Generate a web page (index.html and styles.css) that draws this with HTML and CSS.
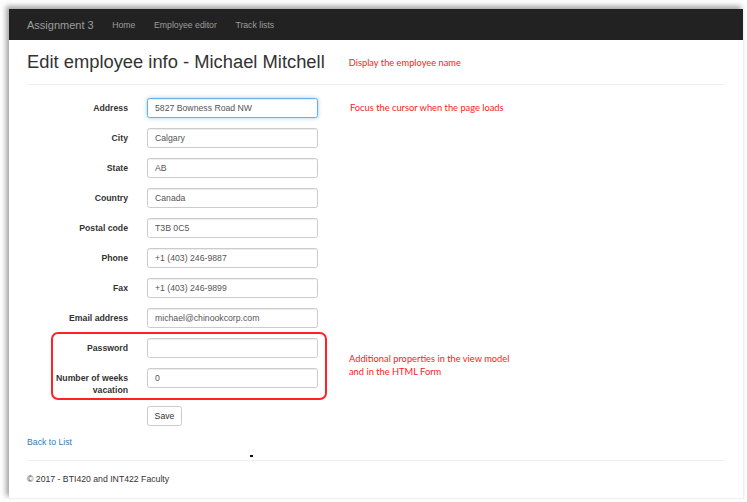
FILE: index.html
```html
<!DOCTYPE html>
<html>
<head>
<meta charset="utf-8">
<title>Edit employee info</title>
<link rel="stylesheet" href="styles.css">
</head>
<body>
<div class="frame">
  <nav class="navbar">
    <span class="brand">Assignment 3</span>
    <a class="navlink" href="#">Home</a>
    <a class="navlink" href="#">Employee editor</a>
    <a class="navlink" href="#">Track lists</a>
  </nav>
  <main class="container">
    <div class="title-row">
      <h2 class="title">Edit employee info - Michael Mitchell</h2>
      <span class="note note-title">Display the employee name</span>
    </div>
    <hr class="rule">
    <form class="form">
      <div class="row">
        <label class="label">Address</label>
        <input class="input focused" value="5827 Bowness Road NW">
        <span class="note note-row">Focus the cursor when the page loads</span>
      </div>
      <div class="row">
        <label class="label">City</label>
        <input class="input" value="Calgary">
      </div>
      <div class="row">
        <label class="label">State</label>
        <input class="input" value="AB">
      </div>
      <div class="row">
        <label class="label">Country</label>
        <input class="input" value="Canada">
      </div>
      <div class="row">
        <label class="label">Postal code</label>
        <input class="input" value="T3B 0C5">
      </div>
      <div class="row">
        <label class="label">Phone</label>
        <input class="input" value="+1 (403) 246-9887">
      </div>
      <div class="row">
        <label class="label">Fax</label>
        <input class="input" value="+1 (403) 246-9899">
      </div>
      <div class="row">
        <label class="label">Email address</label>
        <input class="input" value="michael@chinookcorp.com">
      </div>
      <div class="group-wrap">
        <div class="group">
          <div class="row">
            <label class="label label-in">Password</label>
            <input class="input" type="password" value="">
          </div>
          <div class="row row-last">
            <label class="label label-in">Number of weeks vacation</label>
            <input class="input" value="0">
          </div>
        </div>
        <span class="note note-group">Additional properties in the view model<br>and in the HTML Form</span>
      </div>
      <div class="actions">
        <button class="btn" type="button">Save</button>
      </div>
    </form>
    <a class="back" href="#">Back to List</a>
    <div class="dot"></div>
    <hr class="rule footer-rule">
    <footer class="footer">&copy; 2017 - BTI420 and INT422 Faculty</footer>
  </main>
</div>
</body>
</html>
```
FILE: styles.css
```css
html, body {
  margin: 0;
  padding: 0;
  background: #fdfdfd;
}
body {
  font-family: "Liberation Sans", Arial, sans-serif;
  font-size: 8.7px;
  color: #333;
}
.frame {
  margin: 9px 0 0 9px;
  width: 735px;
  height: 490px;
  background: #fff;
  box-shadow: -3px -3px 5px rgba(0, 0, 0, 0.35);
  border-right: 1px solid #f0f0f0;
  border-bottom: 1px solid #f0f0f0;
  box-sizing: border-box;
  overflow: hidden;
}
.navbar {
  height: 31px;
  background: #222;
  display: flex;
  align-items: center;
  padding-left: 18px;
}
.brand {
  font-size: 11px;
  color: #9d9d9d;
  margin-right: 9.3px;
}
.navlink {
  color: #9d9d9d;
  text-decoration: none;
  font-size: 8.7px;
  padding: 0 9.3px;
}
.container {
  padding: 0 18px;
}
.title-row {
  display: flex;
  align-items: center;
  margin-top: 11.5px;
}
.title {
  margin: 0;
  font-size: 18.35px;
  font-weight: 400;
  line-height: 20.35px;
  color: #333;
}
.note {
  font-family: Lato, "Open Sans", sans-serif;
  color: #ff2020;
  font-size: 9.3px;
}
.note-title {
  margin-left: 24px;
  padding-top: 1px;
}
.rule {
  border: 0;
  border-top: 1px solid #eee;
  margin: 12.2px 0 0;
  height: 0;
}
.form {
  margin-top: 13px;
}
.row {
  display: flex;
  align-items: flex-start;
  margin-bottom: 10px;
}
.row-last {
  margin-bottom: 0;
}
.label {
  width: 101px;
  flex: none;
  box-sizing: border-box;
  text-align: right;
  padding-top: 4px;
  line-height: 12px;
  font-weight: 700;
  color: #333;
}
.input {
  flex: none;
  width: 171px;
  height: 20px;
  margin: 0 0 0 19px;
  box-sizing: border-box;
  border: 1px solid #ccc;
  border-radius: 2.5px;
  padding: 0 7px;
  font-family: "Liberation Sans", Arial, sans-serif;
  font-size: 8.7px;
  color: #555;
  background: #fff;
  box-shadow: inset 0 1px 1px rgba(0, 0, 0, 0.075);
  outline: none;
}
.focused {
  border-color: #66afe9;
  box-shadow: inset 0 1px 1px rgba(0, 0, 0, 0.075), 0 0 4px rgba(102, 175, 233, 0.6);
}
.note-row {
  margin-left: 32px;
  padding-top: 4px;
  line-height: 12px;
}
.group-wrap {
  display: flex;
  align-items: center;
  margin-top: -6px;
  margin-bottom: 6px;
}
.group {
  margin-left: 24px;
  width: 276px;
  box-sizing: border-box;
  border: 2px solid #f22;
  border-radius: 7px;
  padding: 4px 0 2px;
}
.group .label-in {
  width: 75px;
}
.note-group {
  margin-left: 22px;
  line-height: 13px;
  padding-bottom: 3px;
}
.actions {
  padding-left: 120px;
  margin-bottom: 10px;
}
.btn {
  width: 35px;
  height: 20px;
  border: 1px solid #ccc;
  border-radius: 2.5px;
  background: #fff;
  color: #333;
  font-family: "Liberation Sans", Arial, sans-serif;
  font-size: 8.7px;
  padding: 0;
  display: block;
}
.back {
  display: block;
  line-height: 12px;
  color: #337ab7;
  text-decoration: none;
  width: max-content;
}
.dot {
  width: 3px;
  height: 2px;
  background: #111;
  margin: 7px 0 0 223px;
}
.footer-rule {
  margin-top: 3px;
}
.footer {
  margin-top: 12px;
  line-height: 12px;
  color: #333;
}
```
